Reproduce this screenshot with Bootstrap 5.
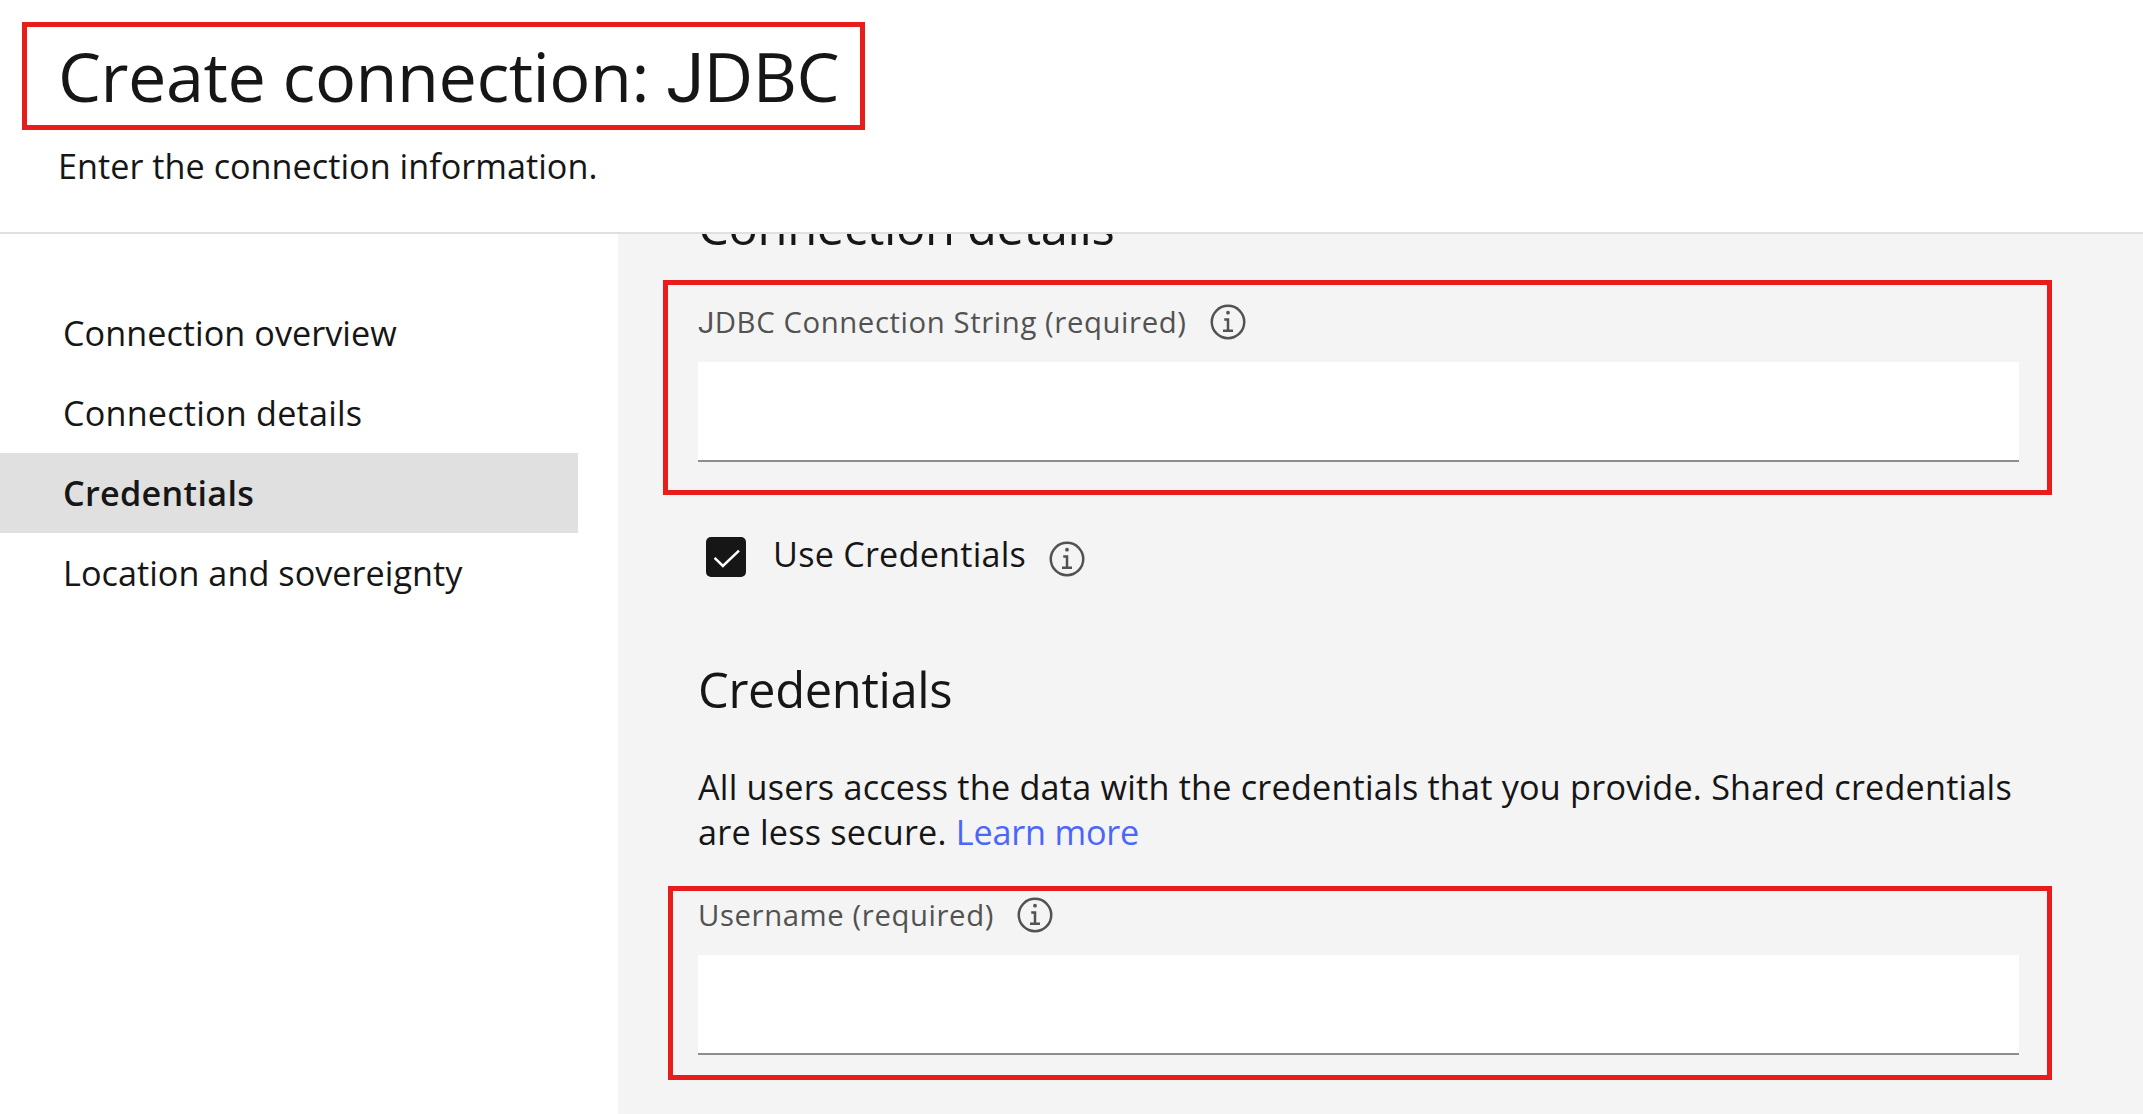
<!DOCTYPE html>
<html lang="en">
<head>
<meta charset="utf-8">
<meta name="viewport" content="width=device-width, initial-scale=1">
<title>Create connection: JDBC</title>
<link href="https://cdn.jsdelivr.net/npm/bootstrap@5.3.0/dist/css/bootstrap.min.css" rel="stylesheet">
<style>
  :root { --ink: #161616; --ink-soft: #525252; --layer: #f4f4f4; --line: #e0e0e0; --callout: #e91c1c; }
  body { font-family: "Open Sans", "Noto Sans", sans-serif; font-size: 34.2px; color: var(--ink); background: #fff; }
  .alt-j { font-family: Roboto, sans-serif; }
  .callout { border: 5px solid var(--callout); }

  .page-head { height: 234px; border-bottom: 2px solid var(--line); padding: 22px 0 0 22px; }
  .title-box { width: 843px; height: 108px; padding-left: 31px; }
  .title-box h1 { font-size: 68.4px; font-weight: 400; line-height: 98px; letter-spacing: -.48px; }
  .page-sub { margin: 14px 0 0 36px; line-height: 44px; letter-spacing: .02px; }

  .side { width: 618px; padding-top: 59px; }
  .side .nav-link { width: 578px; height: 80px; padding: 0 0 0 63px; line-height: 80px; color: var(--ink); letter-spacing: .04px; }
  .side .nav-link.active { background: var(--line); font-weight: 600; letter-spacing: .3px; }
  .side .wider { letter-spacing: .2px; }

  .form-pane { background: var(--layer); padding-left: 80px; }
  .section-title { font-size: 48.9px; font-weight: 400; line-height: 60px; letter-spacing: -.35px; margin: 0; }
  .scrolled { margin-top: -38px; }

  .field-a { width: 1389px; height: 215px; margin: 24px 0 0 -35px; padding: 17px 0 0 30px; }
  .field-b { width: 1384px; height: 194px; margin: 32px 0 0 -30px; padding: 4px 0 0 25px; }
  .field-head { height: 40px; margin-bottom: 20px; }
  .field-head label { font-size: 29.3px; line-height: 40px; color: var(--ink-soft); letter-spacing: .6px; }
  .field-a label { width: 510px; }
  .field-b label { width: 317px; }
  .field-input { width: 1321px; height: 100px; border: 0; border-bottom: 2px solid #8d8d8d; border-radius: 0; background: #fff; }
  .info { width: 40px; height: 40px; fill: var(--ink-soft); flex: none; }

  .use-row { height: 40px; margin: 42px 0 82px 8px; }
  .tick { width: 40px; height: 40px; flex: none; }
  .use-row label { width: 301px; padding-left: 27px; line-height: 34px; letter-spacing: .22px; }
  .use-row .info { margin-top: 2px; }

  .note { margin: 45px 0 0; line-height: 45px; letter-spacing: .21px; }
  .note a { color: #4a66fb; letter-spacing: -.2px; }
</style>
<script src="https://cdn.jsdelivr.net/npm/bootstrap@5.3.0/dist/js/bootstrap.bundle.min.js"></script>
</head>
<body class="vh-100 overflow-hidden d-flex flex-column">

<svg class="d-none" aria-hidden="true">
  <symbol id="i-info" viewBox="0 0 32 32">
    <path d="M17 22V13H13V15H15V22H12V24H20V22ZM16 7a1.5 1.5 0 1 0 1.5 1.5A1.5 1.5 0 0 0 16 7Z"/>
    <path d="M16 30A14 14 0 1 1 30 16 14 14 0 0 1 16 30ZM16 4A12 12 0 1 0 28 16 12 12 0 0 0 16 4Z" fill-rule="evenodd"/>
  </symbol>
</svg>

<header class="page-head flex-shrink-0">
  <div class="title-box callout">
    <h1 class="m-0 text-nowrap">Create connection: <span class="alt-j">J</span>DBC</h1>
  </div>
  <p class="page-sub">Enter the connection information.</p>
</header>

<div class="d-flex flex-grow-1 overflow-hidden">
  <nav class="side nav flex-column flex-nowrap flex-shrink-0">
    <a class="nav-link" href="#">Connection overview</a>
    <a class="nav-link wider" href="#">Connection details</a>
    <a class="nav-link active" href="#" aria-current="step">Credentials</a>
    <a class="nav-link" href="#">Location and sovereignty</a>
  </nav>

  <main class="form-pane flex-grow-1 overflow-hidden">
    <h2 class="section-title scrolled">Connection details</h2>

    <div class="field-a callout">
      <div class="field-head d-flex align-items-center">
        <label class="text-nowrap" for="jdbc"><span class="alt-j">J</span>DBC Connection String (required)</label>
        <svg class="info"><use href="#i-info"/></svg>
      </div>
      <input class="field-input form-control" id="jdbc" type="text">
    </div>

    <div class="use-row d-flex align-items-start">
      <svg class="tick" viewBox="0 0 40 40">
        <rect width="40" height="40" rx="5" fill="#161616"/>
        <path d="M8.6 20.9 16.9 29 33 13.6" fill="none" stroke="#fff" stroke-width="2.5"/>
      </svg>
      <label class="text-nowrap flex-shrink-0">Use Credentials</label>
      <svg class="info"><use href="#i-info"/></svg>
    </div>

    <h2 class="section-title">Credentials</h2>
    <p class="note text-nowrap">All users access the data with the credentials that you provide. Shared credentials<br>are less secure. <a class="text-decoration-none" href="#">Learn more</a></p>

    <div class="field-b callout">
      <div class="field-head d-flex align-items-center">
        <label class="text-nowrap" for="user">Username (required)</label>
        <svg class="info"><use href="#i-info"/></svg>
      </div>
      <input class="field-input form-control" id="user" type="text">
    </div>
  </main>
</div>
</body>
</html>
